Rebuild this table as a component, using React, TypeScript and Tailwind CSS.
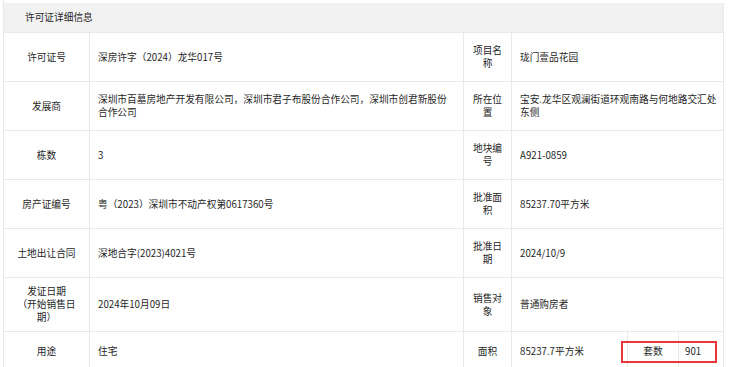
import type { ReactNode } from "react";

interface Row {
  label: ReactNode;
  value: ReactNode;
  label2: ReactNode;
  value2: ReactNode;
  tall?: boolean;
}

const rows: Row[] = [
  { label: "许可证号", value: "深房许字（2024）龙华017号", label2: "项目名称", value2: "珑门壹品花园" },
  {
    label: "发展商",
    value: "深圳市百墓房地产开发有限公司，深圳市君子布股份合作公司，深圳市创君新股份合作公司",
    label2: "所在位置",
    value2: "宝安.龙华区观澜街道环观南路与何地路交汇处东侧",
  },
  { label: "栋数", value: "3", label2: "地块编号", value2: "A921-0859" },
  { label: "房产证编号", value: "粤（2023）深圳市不动产权第0617360号", label2: "批准面积", value2: "85237.70平方米" },
  { label: "土地出让合同", value: "深地合字(2023)4021号", label2: "批准日期", value2: "2024/10/9" },
  {
    label: (
      <>
        发证日期
        <br />
        （开始销售日期）
      </>
    ),
    value: "2024年10月09日",
    label2: "销售对象",
    value2: "普通购房者",
    tall: true,
  },
];

function LabelCell({ children, width }: { children: ReactNode; width: string }) {
  return (
    <div className={`${width} shrink-0 flex items-center justify-center text-center border-r border-[#e9e9e9] px-[10px] py-[7px]`}>
      <div>{children}</div>
    </div>
  );
}

function ValueCell({ children, width, pr }: { children: ReactNode; width: string; pr: string }) {
  return (
    <div className={`${width} ${pr} shrink-0 flex items-center border-r border-[#e9e9e9] pl-[8px] py-[7px]`}>
      <div>{children}</div>
    </div>
  );
}

export default function App() {
  return (
    <div
      lang="zh-CN"
      className="min-h-[367px] bg-white text-[#262626] text-[9.7px] leading-[13px]"
      style={{ fontFamily: '"Noto Sans CJK SC", sans-serif' }}
    >
      <div className="ml-[3px] pt-[3px] w-[721px] border-l border-[#e9e9e9]">
        <div className="h-[30px] flex items-center bg-[#f2f2f2] border-r border-b border-[#e9e9e9] pl-[21px]">
          许可证详细信息
        </div>
        {rows.map((r, i) => (
          <div key={i} className={`flex border-b border-[#e9e9e9] ${r.tall ? "min-h-[54px]" : "min-h-[49px]"}`}>
            <LabelCell width="w-[86px]">{r.label}</LabelCell>
            <ValueCell width="w-[374px]" pr="pr-[12px]">{r.value}</ValueCell>
            <div className="w-[48px] shrink-0 flex items-center justify-center text-center border-r border-[#e9e9e9] px-[5px]">
              <div>{r.label2}</div>
            </div>
            <ValueCell width="w-[212px]" pr="pr-[3px]">{r.value2}</ValueCell>
          </div>
        ))}
        <div className="flex h-[40px] border-b border-[#e9e9e9]">
          <LabelCell width="w-[86px]">用途</LabelCell>
          <ValueCell width="w-[374px]" pr="pr-[12px]">住宅</ValueCell>
          <div className="w-[48px] shrink-0 flex items-center justify-center border-r border-[#e9e9e9]">面积</div>
          <div className="w-[116px] shrink-0 flex items-center border-r border-[#e9e9e9] pl-[8px]">85237.7平方米</div>
          <div className="relative w-[51px] shrink-0 flex items-center justify-center border-r border-[#e9e9e9]">
            套数
            <div className="absolute left-[-7px] top-[9px] w-[96px] h-[22px] border-2 border-[#e8383d]" />
          </div>
          <div className="w-[45px] shrink-0 flex items-center border-r border-[#e9e9e9] pl-[6px]">901</div>
        </div>
      </div>
    </div>
  );
}
